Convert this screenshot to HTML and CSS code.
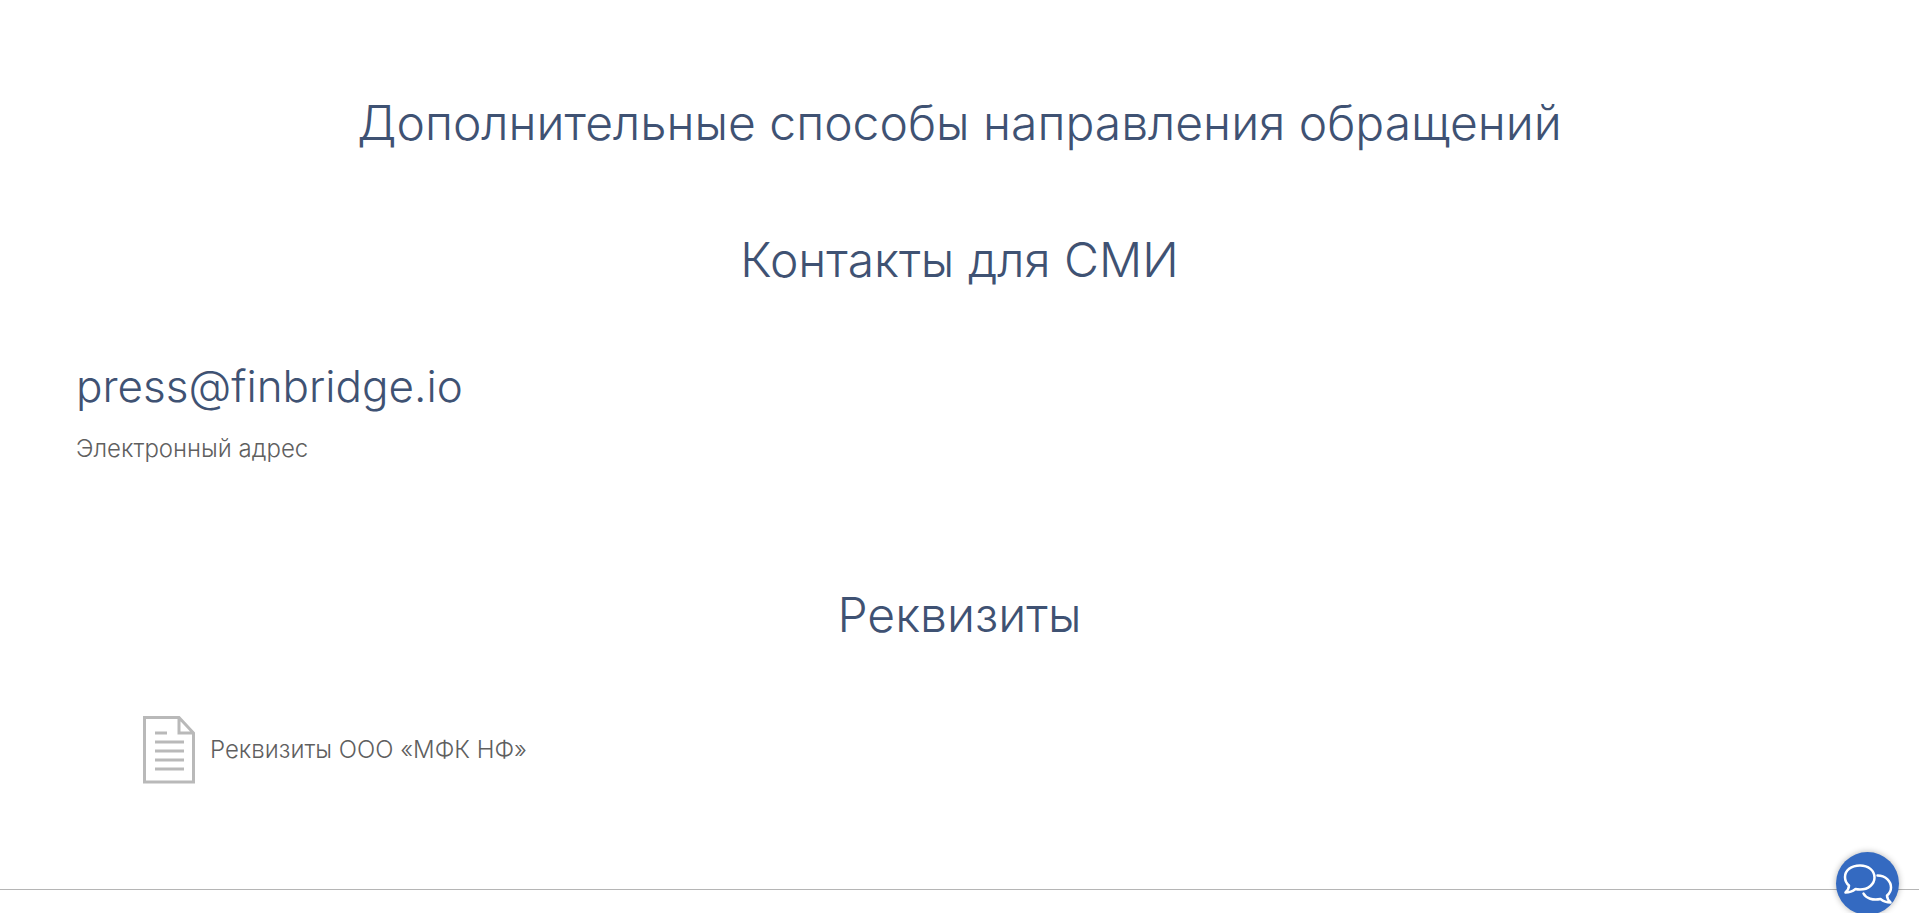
FILE: index.html
```html
<!DOCTYPE html>
<html lang="ru">
<head>
    <meta charset="UTF-8">
    <meta name="viewport" content="width=device-width, initial-scale=1.0">
    <title>Контакты</title>
    <link rel="stylesheet" href="styles.css">
</head>
<body>

    <main class="content">
        <section class="section">
            <h2>Дополнительные способы направления обращений</h2>
        </section>

        <section class="section">
            <h2>Контакты для СМИ</h2>
            <div class="contact">
                <a href="mailto:press@finbridge.io" class="contact-mail">press@finbridge.io</a>
                <p class="contact-label">Электронный адрес</p>
            </div>
        </section>

        <section class="section">
            <h2>Реквизиты</h2>
            <a href="#" class="document">
                <svg class="document-icon" viewBox="0 0 54 68" aria-hidden="true">
                    <path d="M2.500 1.500H37L51.500 17V66H2.500Z M37 1.500V17H51.500" />
                    <path d="M13 17H25 M13 26H42 M13 35H42 M13 44H42 M13 53H42" />
                </svg>
                <span>Реквизиты ООО «МФК НФ»</span>
            </a>
        </section>
    </main>

    <footer class="footer"></footer>

    <button type="button" class="chat" aria-label="Открыть чат">
        <svg class="chat-icon" viewBox="0 0 63 63" aria-hidden="true">
            <path d="M24 13.500C15 13.500 9 18.500 9 25C9 28.500 10.500 31.500 13 33.500C13 36 11.500 38.500 9.500 40.500C13.500 40.500 17 39 19.500 37C21 37.400 22.500 37.500 24 37.500C32.500 37.500 38.500 32 38.500 25.500C38.500 18.500 32.500 13.500 24 13.500Z" />
            <path d="M41.500 23.500C49.500 23.500 55 29 55 35.500C55 39 53.500 41.500 51 43.500C51 46 52.500 48.500 54.500 50.500C50.500 50.500 47 49 44.500 47C37 48.500 30 46.500 27.500 41.500" />
        </svg>
    </button>

</body>
</html>
```
FILE: styles.css
```css
* {
    margin: 0;
    padding: 0;
    box-sizing: border-box;
}

body {
    background-color: white;
    color: #5f5f5f;
    font-family: Inter, "Noto Sans", sans-serif;
    font-size: 24px;
    font-weight: 300;
    line-height: 32px;
}

a {
    color: inherit;
    text-decoration: none;
}

h2 {
    font-size: 48px;
    font-weight: 300;
    line-height: 60px;
    color: #3f5273;
    text-align: center;
}

.content {
    padding: 93px 76px 97px;
}

.section + .section {
    margin-top: 77px;
}

/* Контакты */
.contact {
    margin-top: 66px;
    padding-bottom: 43px;
}

.contact-mail {
    display: inline-block;
    font-size: 44px;
    line-height: 60px;
    color: #3f5273;
}

.contact-label {
    margin-top: 17px;
}

/* Ссылка на документ */
.document {
    display: inline-flex;
    align-items: center;
    gap: 14px;
    margin: 71px 0 0 66px;
}

.document-icon {
    width: 54px;
    height: 68px;
    fill: none;
    stroke: #b9b9b9;
    stroke-width: 3;
}

.footer {
    min-height: 24px;
    border-top: 1px solid #b5b5b5;
}

/* Кнопка чата поверх страницы */
.chat {
    position: fixed;
    right: 20px;
    bottom: -2px;
    width: 63px;
    height: 63px;
    border: none;
    border-radius: 50%;
    background: #346ac1;
    box-shadow: 0 0 6px rgba(0, 0, 0, 0.3);
    cursor: pointer;
}

.chat-icon {
    display: block;
    width: 63px;
    height: 63px;
    fill: none;
    stroke: white;
    stroke-width: 2.5;
    stroke-linecap: round;
    stroke-linejoin: round;
}
```
